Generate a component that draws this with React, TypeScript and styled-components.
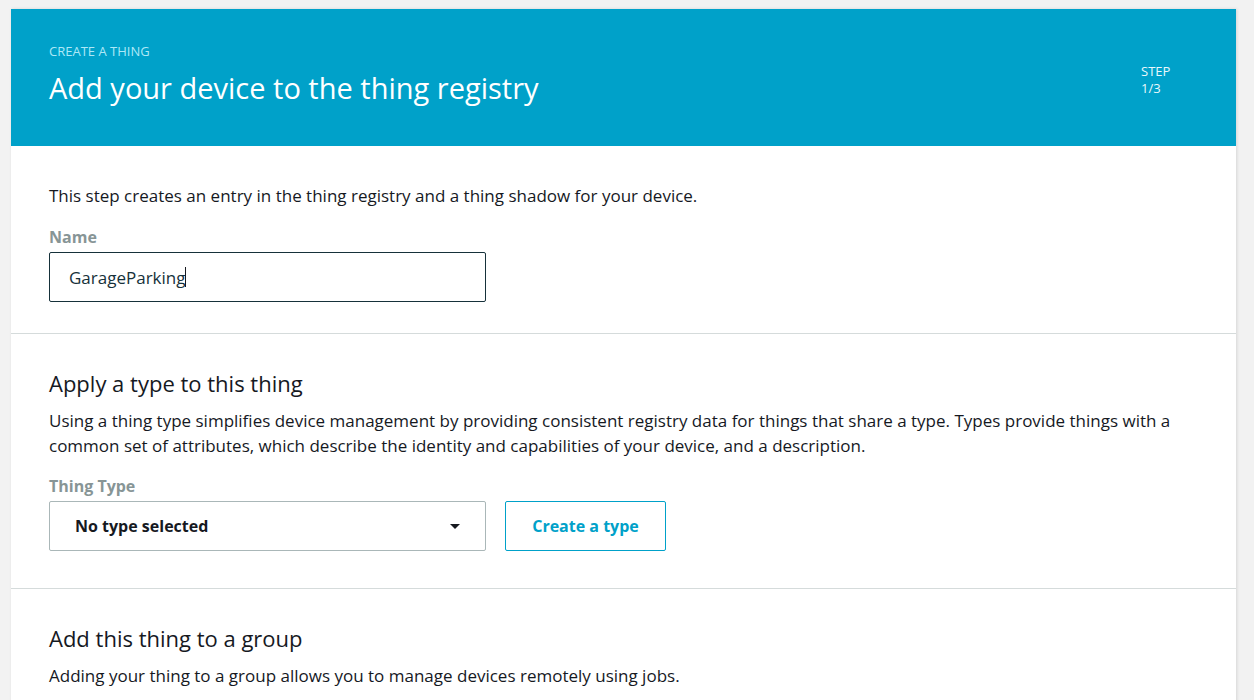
import styled, { createGlobalStyle } from "styled-components";

const GlobalStyle = createGlobalStyle`
  html, body {
    margin: 0;
    padding: 0;
    background: #f2f2f2;
    font-family: "Open Sans", "Liberation Sans", sans-serif;
    color: #16191f;
  }
`;

const Page = styled.div`
  padding: 9px 18px 0 11px;
  height: 700px;
  box-sizing: border-box;
  overflow: hidden;
`;

const Card = styled.div`
  background: #fff;
  box-shadow: 1px 0 3px rgba(0, 0, 0, 0.12);
  min-height: 700px;
`;

const Banner = styled.div`
  background: #00a1c9;
  height: 137px;
  box-sizing: border-box;
  padding: 34px 60px 0 38px;
  display: flex;
  justify-content: space-between;
`;

const Eyebrow = styled.div`
  color: #aee8f7;
  font-size: 13px;
  line-height: 16px;
  text-transform: uppercase;
`;

const Title = styled.h1`
  margin: 8px 0 0;
  color: #fff;
  font-size: 29px;
  font-weight: 400;
  line-height: 42px;
`;

const Step = styled.div`
  color: #eaf8fc;
  font-size: 13px;
  line-height: 17px;
  margin-top: 20px;
  width: 35px;
`;

const Section = styled.section<{ $top: number; $bottom: number; $last?: boolean }>`
  padding: ${(p) => p.$top}px 38px ${(p) => p.$bottom}px;
  border-bottom: ${(p) => (p.$last ? "none" : "1px solid #d5dbdb")};
`;

const Heading = styled.h2`
  margin: 0 0 10px;
  font-size: 22px;
  font-weight: 400;
  line-height: 30px;
  color: #16191f;
`;

const Text = styled.p`
  margin: 0;
  font-size: 17px;
  line-height: 25px;
  color: #16191f;
`;

const Label = styled.div<{ $top: number }>`
  margin-top: ${(p) => p.$top}px;
  font-size: 16px;
  font-weight: 700;
  line-height: 22px;
  color: #879596;
`;

const Row = styled.div`
  display: flex;
  gap: 19px;
  margin-top: 4px;
`;

const Input = styled.div`
  width: 437px;
  height: 50px;
  box-sizing: border-box;
  border: 1px solid #16313a;
  border-radius: 2px;
  padding: 0 19px;
  display: flex;
  align-items: center;
  font-size: 17px;
  color: #16313a;
  margin-top: 4px;
`;

const Caret = styled.span`
  display: inline-block;
  width: 1px;
  height: 20px;
  background: #16191f;
`;

const Select = styled.div`
  width: 437px;
  height: 50px;
  box-sizing: border-box;
  border: 1px solid #aab7b8;
  border-radius: 2px;
  padding: 0 25px 0 25px;
  display: flex;
  align-items: center;
  justify-content: space-between;
  font-size: 16px;
  font-weight: 700;
  color: #16191f;
`;

const Arrow = styled.span`
  width: 0;
  height: 0;
  border-left: 5px solid transparent;
  border-right: 5px solid transparent;
  border-top: 5px solid #16191f;
`;

const Button = styled.button`
  width: 161px;
  height: 50px;
  box-sizing: border-box;
  background: #fff;
  border: 1px solid #00a1c9;
  border-radius: 2px;
  color: #00a1c9;
  font-family: inherit;
  font-size: 16px;
  font-weight: 700;
`;

export default function App() {
  return (
    <>
      <GlobalStyle />
      <Page>
        <Card>
          <Banner>
            <div>
              <Eyebrow>Create a thing</Eyebrow>
              <Title>Add your device to the thing registry</Title>
            </div>
            <Step>STEP 1/3</Step>
          </Banner>

          <Section $top={37} $bottom={31}>
            <Text>This step creates an entry in the thing registry and a thing shadow for your device.</Text>
            <Label $top={18}>Name</Label>
            <Input>
              GarageParking
              <Caret />
            </Input>
          </Section>

          <Section $top={34} $bottom={37}>
            <Heading>Apply a type to this thing</Heading>
            <Text>
              Using a thing type simplifies device management by providing consistent registry data for things that share a type. Types provide things with a
              common set of attributes, which describe the identity and capabilities of your device, and a description.
            </Text>
            <Label $top={17}>Thing Type</Label>
            <Row>
              <Select>
                No type selected
                <Arrow />
              </Select>
              <Button>Create a type</Button>
            </Row>
          </Section>

          <Section $top={34} $bottom={40} $last>
            <Heading>Add this thing to a group</Heading>
            <Text>Adding your thing to a group allows you to manage devices remotely using jobs.</Text>
          </Section>
        </Card>
      </Page>
    </>
  );
}
